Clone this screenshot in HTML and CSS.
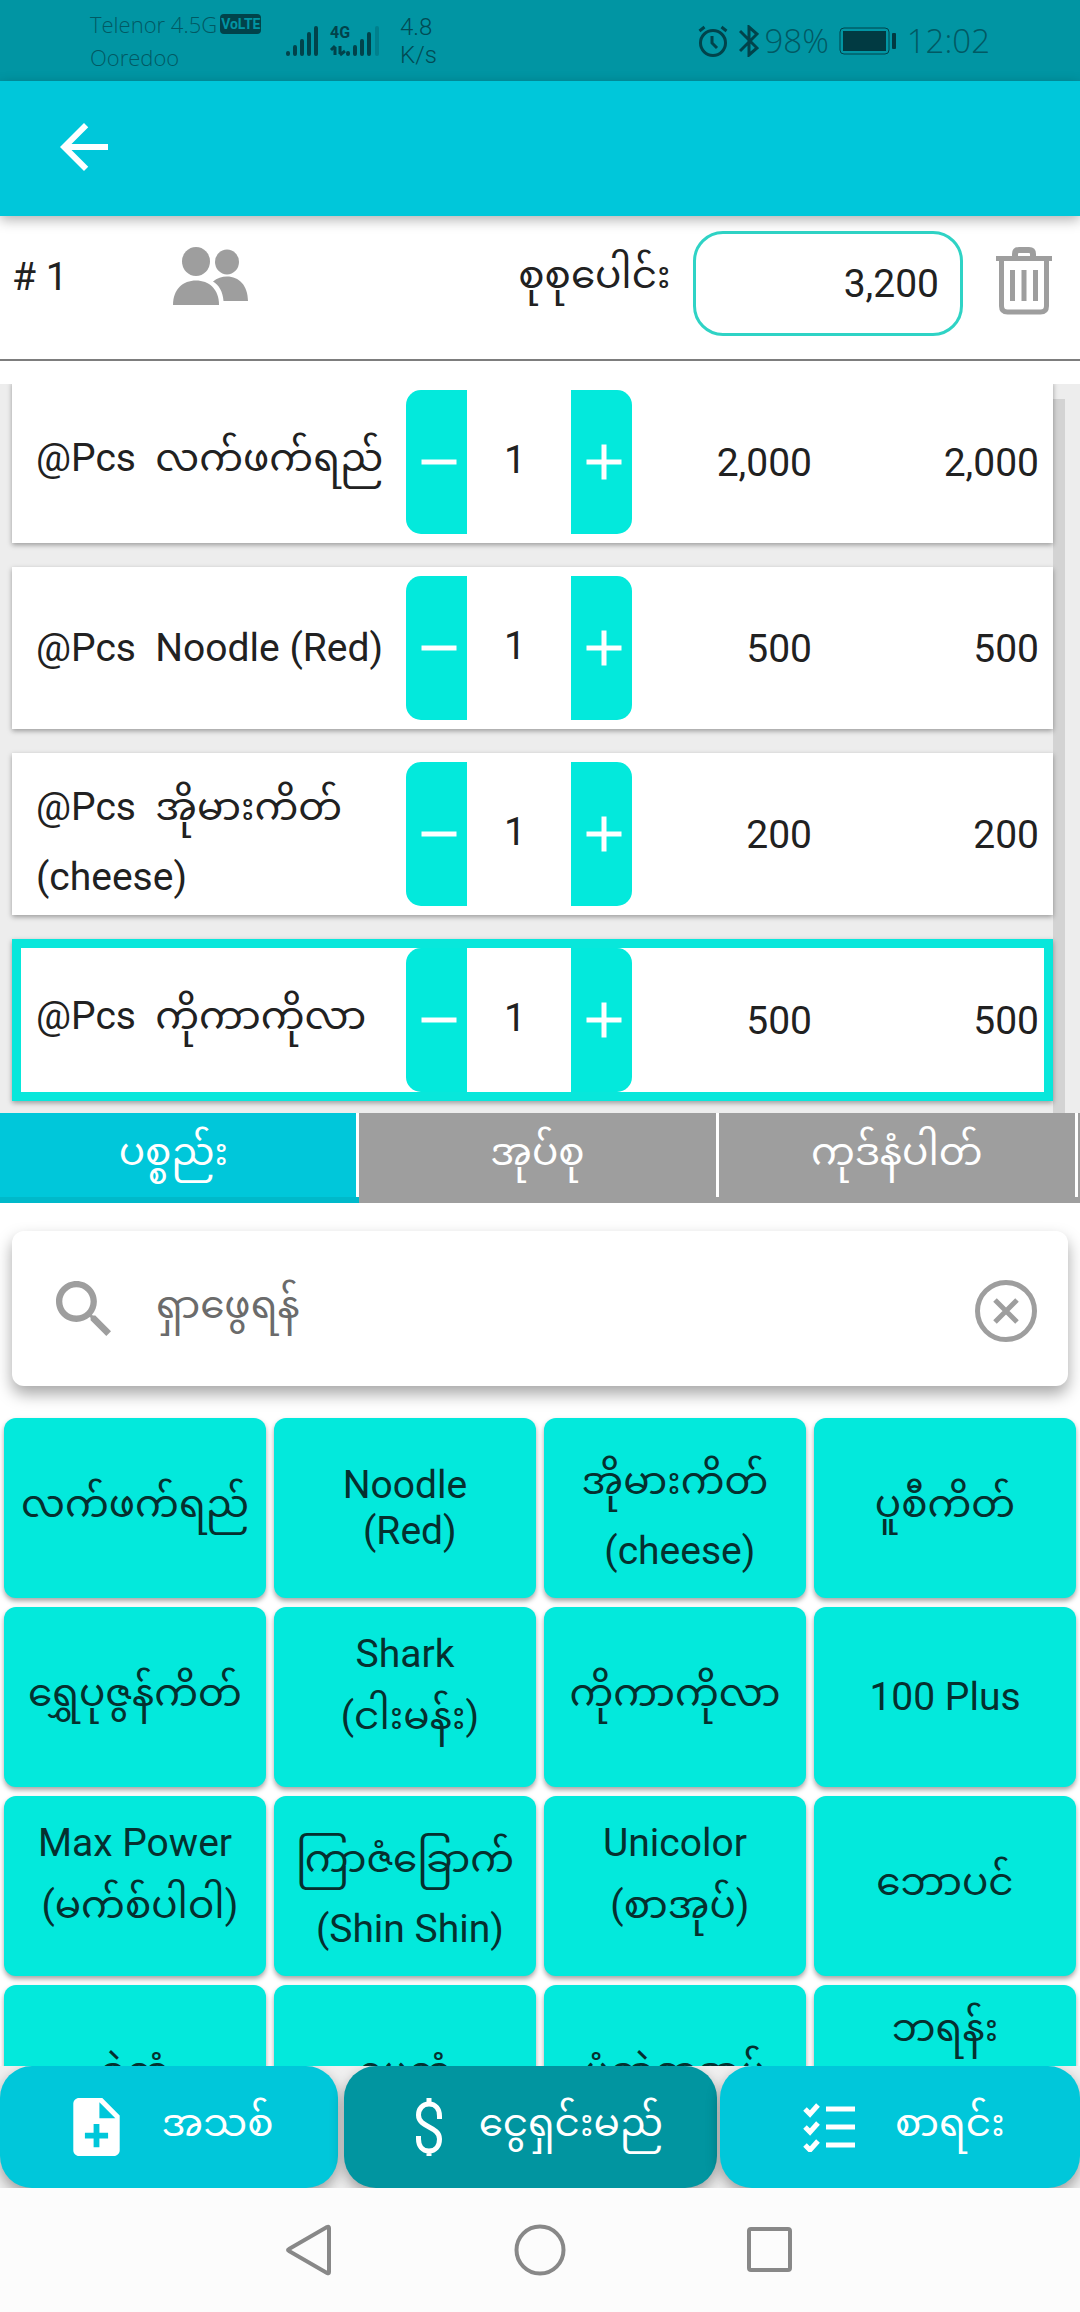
FILE: index.html
```
<!DOCTYPE html>
<html lang="my">
<head>
  <meta charset="UTF-8" />
  <meta name="viewport" content="width=device-width, initial-scale=1.0"/>
  <title>POS - Sale</title>
  <link rel="stylesheet" href="styles.css">
</head>
<body>

<!-- Status bar -->
<div class="status-bar">
  <div class="carriers">
    <div class="carrier">Telenor 4.5G <span class="volte">VoLTE</span></div>
    <div class="carrier">Ooredoo</div>
  </div>
  <svg class="signals" viewBox="0 0 94 32" aria-hidden="true">
    <g stroke-width="4" stroke-linecap="round">
      <path d="M2 28v1M9 22v7M16 16v13M23 9v20M30 3v26M62 28v1M69 22v7M76 16v13M83 9v20"/>
      <path d="M91 3v26" opacity=".25"/>
    </g>
    <path d="M49 22v8M45 25l4-4M54 21v8M59 26l-5 4" stroke-width="3"/>
    <text x="44" y="13" font-size="16">4G</text>
  </svg>
  <div class="speed">4.8<br>K/s</div>
  <div class="status-right">
    <svg class="alarm" viewBox="0 0 30 32" aria-hidden="true">
      <circle cx="15" cy="18" r="12.5"/>
      <path d="M14 11v7l5 5M1.500 6l5-4M28.500 6l-5-4"/>
    </svg>
    <svg class="bluetooth" viewBox="0 0 20 32" aria-hidden="true">
      <path d="M1 6l17 17-8 7V2l8 7L1 26"/>
    </svg>
    <span class="status-text">98%</span>
    <svg class="battery" viewBox="0 0 58 28" aria-hidden="true">
      <rect x="1" y="1" width="49" height="26" rx="4" fill="none"/>
      <rect x="4" y="4" width="43" height="20" fill="#013a42" stroke="none"/>
      <rect x="53" y="6" width="4" height="16" rx="1" fill="#013a42" stroke="none"/>
    </svg>
    <span class="status-text">12:02</span>
  </div>
</div>

<!-- App bar -->
<header class="app-bar">
  <button type="button" class="btn-back" aria-label="Back">
    <svg viewBox="4 4 16 16"><path d="M20 11H7.830l5.590-5.590L12 4l-8 8 8 8 1.410-1.410L7.830 13H20v-2z"/></svg>
  </button>
</header>

<main class="sale">
  <!-- Sale summary -->
  <section class="summary">
    <span class="sale-no"># 1</span>
    <button type="button" class="btn-customer" aria-label="Customer">
      <svg viewBox="0 0 75 58">
        <ellipse cx="23" cy="14.500" rx="14" ry="14.500"/>
        <ellipse cx="54" cy="15" rx="12" ry="12.500"/>
        <path d="M0 58C0 42 10 33.500 23 33.500S46 42 46 58z"/>
        <path d="M40 34.500C44 31 49 29.500 54 29.500c12 0 21 9 21 24.500H50.500C50 45 46 38 40 34.500z"/>
      </svg>
    </button>
    <label class="total-label" for="total">စုစုပေါင်း</label>
    <input class="total-box" id="total" type="text" value="3,200" readonly>
    <button type="button" class="btn-delete" aria-label="Delete">
      <svg viewBox="0 0 56 68">
        <path d="M19 11V7q0-4 4-4h10q4 0 4 4v4" fill="none" stroke="#9e9e9e" stroke-width="6"/>
        <path d="M0 9h56v5H0z"/>
        <path d="M5.500 12v47q0 6 6 6h33q6 0 6-6V12" fill="none" stroke="#9e9e9e" stroke-width="5"/>
        <path d="M14 23h5v31h-5zM25.500 23h5v31h-5zM37 23h5v31h-5z"/>
      </svg>
    </button>
  </section>

  <!-- Ordered items -->
  <section class="order">
    <ul class="order-list">
      <li class="order-row">
        <span class="item-name">@Pcs&nbsp; လက်ဖက်ရည်</span>
        <div class="stepper">
          <button type="button" class="btn-minus" aria-label="Less"><svg viewBox="4 4 16 16"><path d="M19 13H5v-2h14v2z"/></svg></button>
          <span class="qty">1</span>
          <button type="button" class="btn-plus" aria-label="More"><svg viewBox="4 4 16 16"><path d="M19 13h-6v6h-2v-6H5v-2h6V5h2v6h6v2z"/></svg></button>
        </div>
        <span class="price">2,000</span>
        <span class="price">2,000</span>
      </li>
      <li class="order-row">
        <span class="item-name">@Pcs&nbsp; Noodle (Red)</span>
        <div class="stepper">
          <button type="button" class="btn-minus" aria-label="Less"><svg viewBox="4 4 16 16"><path d="M19 13H5v-2h14v2z"/></svg></button>
          <span class="qty">1</span>
          <button type="button" class="btn-plus" aria-label="More"><svg viewBox="4 4 16 16"><path d="M19 13h-6v6h-2v-6H5v-2h6V5h2v6h6v2z"/></svg></button>
        </div>
        <span class="price">500</span>
        <span class="price">500</span>
      </li>
      <li class="order-row">
        <span class="item-name">@Pcs&nbsp; အိုမားကိတ်<br>(cheese)</span>
        <div class="stepper">
          <button type="button" class="btn-minus" aria-label="Less"><svg viewBox="4 4 16 16"><path d="M19 13H5v-2h14v2z"/></svg></button>
          <span class="qty">1</span>
          <button type="button" class="btn-plus" aria-label="More"><svg viewBox="4 4 16 16"><path d="M19 13h-6v6h-2v-6H5v-2h6V5h2v6h6v2z"/></svg></button>
        </div>
        <span class="price">200</span>
        <span class="price">200</span>
      </li>
      <li class="order-row selected">
        <span class="item-name">@Pcs&nbsp; ကိုကာကိုလာ</span>
        <div class="stepper">
          <button type="button" class="btn-minus" aria-label="Less"><svg viewBox="4 4 16 16"><path d="M19 13H5v-2h14v2z"/></svg></button>
          <span class="qty">1</span>
          <button type="button" class="btn-plus" aria-label="More"><svg viewBox="4 4 16 16"><path d="M19 13h-6v6h-2v-6H5v-2h6V5h2v6h6v2z"/></svg></button>
        </div>
        <span class="price">500</span>
        <span class="price">500</span>
      </li>
    </ul>
    <div class="scrollbar"></div>
  </section>

  <!-- Catalog -->
  <section class="catalog">
    <div class="tabs">
      <button type="button" class="tab active">ပစ္စည်း&nbsp;</button>
      <button type="button" class="tab">အုပ်စု</button>
      <button type="button" class="tab">ကုဒ်နံပါတ်</button>
    </div>

    <div class="search">
      <svg class="search-icon" viewBox="3 3 17.490 17.490" aria-hidden="true"><path d="M15.500 14h-.790l-.280-.270C15.410 12.590 16 11.110 16 9.500 16 5.910 13.090 3 9.500 3S3 5.910 3 9.500 5.910 16 9.500 16c1.610 0 3.090-.590 4.230-1.570l.270.280v.790l5 4.990L20.490 19l-4.990-5zm-6 0C7.010 14 5 11.990 5 9.500S7.010 5 9.500 5 14 7.010 14 9.500 11.990 14 9.500 14z"/></svg>
      <input class="search-box" type="text" placeholder="ရှာဖွေရန်" aria-label="ရှာဖွေရန်">
      <button type="button" class="btn-clear" aria-label="Clear">
        <svg viewBox="0 0 62 62"><circle cx="31" cy="31" r="28.500"/><path d="M20 20l22 22M42 20L20 42"/></svg>
      </button>
    </div>

    <div class="items">
      <button type="button" class="item">လက်ဖက်ရည်</button>
      <button type="button" class="item">Noodle<br>&nbsp;(Red)</button>
      <button type="button" class="item">အိုမားကိတ်<br>&nbsp;(cheese)</button>
      <button type="button" class="item">ပူစီကိတ်</button>
      <button type="button" class="item">ရွှေပုဇွန်ကိတ်</button>
      <button type="button" class="item">Shark<br>&nbsp;(ငါးမန်း)</button>
      <button type="button" class="item">ကိုကာကိုလာ</button>
      <button type="button" class="item">100 Plus</button>
      <button type="button" class="item">Max Power<br>&nbsp;(မက်စ်ပါဝါ)</button>
      <button type="button" class="item">ကြာဇံခြောက်<br>&nbsp;(Shin Shin)</button>
      <button type="button" class="item">Unicolor<br>&nbsp;(စာအုပ်)</button>
      <button type="button" class="item">ဘောပင်</button>
      <button type="button" class="item">ခဲတံ</button>
      <button type="button" class="item">ပေတံ</button>
      <button type="button" class="item">ပုံဆွဲစာအုပ်</button>
      <button type="button" class="item">ဘရန်း<br>ကိတ်</button>
    </div>
  </section>
</main>

<!-- Actions -->
<footer class="actions">
  <button type="button" class="action btn-new">
    <svg class="icon-new" viewBox="4 2 16 20"><path d="M14 2H6c-1.100 0-2 .9-2 2v16c0 1.100.9 2 2 2h12c1.100 0 2-.9 2-2V8l-6-6zm2 14h-3v3h-2v-3H8v-2h3v-3h2v3h3v2zm-3-7V3.500L18.500 9H13z"/></svg>
    အသစ်
  </button>
  <button type="button" class="action btn-pay">
    <svg class="icon-pay" viewBox="0 0 26 58"><path d="M13 0v7M13 51v7M23.500 21v-3c0-7-4-12-10.500-12S2.500 11 2.500 17c0 13 21 11 21 24 0 7-4 12-10.500 12S2.500 48 2.500 41v-3"/></svg>
    ငွေရှင်းမည်
  </button>
  <button type="button" class="action btn-list">
    <svg class="icon-list" viewBox="0 0 52 50"><path d="M23 7h29M23 25h29M23 43h29M2 7l5 5 8-9M2 25l5 5 8-9M2 43l5 5 8-9"/></svg>
    စာရင်း
  </button>
</footer>

<!-- System navigation -->
<nav class="nav-bar">
  <button type="button" aria-label="Back"><svg viewBox="0 0 52 52"><path d="M44 4v44q0 2-2 1L4 27q-2-1 0-2L42 3q2-1 2 1z"/></svg></button>
  <button type="button" aria-label="Home"><svg viewBox="0 0 52 52"><circle cx="26" cy="26" r="23.500"/></svg></button>
  <button type="button" aria-label="Recent"><svg viewBox="0 0 52 52"><rect x="6" y="5" width="41" height="41" rx="2"/></svg></button>
</nav>

</body>
</html>
```

FILE: styles.css
```
* {
  box-sizing: border-box;
}

body {
  display: flex;
  flex-direction: column;
  height: 100vh;
  margin: 0;
  background-color: #fff;
  color: #212121;
  font-family: Roboto, "Noto Sans Myanmar", "Noto Sans", sans-serif;
  font-size: 39px;
}

button,
input {
  padding: 0;
  border: none;
  background: none;
  color: inherit;
  font: inherit;
}

button {
  cursor: pointer;
}

svg {
  display: block;
  flex: none;
}

/* Status bar */
.status-bar {
  display: flex;
  align-items: center;
  height: 81px;
  padding: 0 90px;
  background-color: #0195a3;
  color: #015963;
  font-family: "Open Sans", sans-serif;
  font-weight: 300;
}

.carriers {
  width: 196px;
  font-size: 22px;
  line-height: 33px;
}

.carrier {
  display: flex;
  align-items: center;
  gap: 3px;
  white-space: nowrap;
}

.volte {
  padding: 0 1px;
  border-radius: 4px;
  background-color: #01434b;
  color: #0195a3;
  font-family: Roboto, sans-serif;
  font-size: 14px;
  font-weight: 700;
  line-height: 20px;
}

.signals {
  width: 94px;
  height: 32px;
  fill: none;
  stroke: #01434b;
}

.signals text {
  fill: #01434b;
  stroke: none;
  font-family: Roboto, sans-serif;
  font-weight: 700;
}

.speed {
  margin-left: 20px;
  color: #014b54;
  font-family: Roboto, sans-serif;
  font-size: 24px;
  line-height: 28px;
}

.status-right {
  display: flex;
  align-items: center;
  margin-left: auto;
}

.alarm,
.bluetooth,
.battery {
  fill: none;
  stroke: #01434b;
  stroke-width: 3;
}

.alarm {
  width: 30px;
  height: 32px;
  margin-right: 11px;
}

.bluetooth {
  width: 20px;
  height: 32px;
  margin-right: 5px;
}

.battery {
  width: 58px;
  height: 28px;
  margin: 0 10px;
  stroke-width: 1;
}

.status-text {
  font-size: 33px;
}

/* App bar */
.app-bar {
  position: relative;
  z-index: 1;
  display: flex;
  align-items: center;
  height: 135px;
  padding: 0 60px 4px;
  background-color: #00c7da;
  box-shadow: 0 4px 12px rgba(0, 0, 0, 0.3);
}

.btn-back svg {
  width: 48px;
  height: 48px;
  fill: #fff;
}

.sale {
  display: flex;
  flex: 1;
  flex-direction: column;
  min-height: 0;
}

/* Summary */
.summary {
  display: flex;
  align-items: flex-start;
  height: 145px;
  margin-bottom: 23px;
  padding: 15px 28px 0 12px;
  border-bottom: 2px solid #7d7d7d;
}

.sale-no {
  width: 161px;
  margin-top: 23px;
}

.btn-customer {
  margin-top: 16px;
}

.btn-customer svg {
  width: 75px;
  height: 58px;
  fill: #9e9e9e;
}

.total-label {
  margin-top: 5px;
  margin-right: 22px;
  margin-left: auto;
}

.total-box {
  width: 26%;
  height: 105px;
  padding: 0 21px;
  border: 3px solid #2fd3c5;
  border-radius: 30px;
  text-align: right;
}

.btn-delete {
  margin-top: 16px;
  margin-left: 33px;
}

.btn-delete svg {
  width: 56px;
  height: 68px;
  fill: #9e9e9e;
}

/* Order */
.order {
  position: relative;
  display: flex;
  flex: 13 1 0;
  flex-direction: column;
  justify-content: flex-end;
  min-height: 0;
  overflow: hidden;
  background-color: #ededed;
}

.order-list {
  display: flex;
  flex: none;
  flex-direction: column;
  gap: 24px;
  margin: 0;
  padding: 0 27px 12px 12px;
  list-style: none;
}

.order-row {
  position: relative;
  z-index: 1;
  display: grid;
  grid-template-columns: 394fr 226px 180fr 241fr;
  align-items: center;
  height: 162px;
  background-color: #fff;
  box-shadow: 0 2px 5px rgba(0, 0, 0, 0.35);
}

.order-row.selected {
  box-shadow: inset 0 0 0 9px #08e7db, 0 2px 5px rgba(0, 0, 0, 0.35);
}

.item-name {
  padding-left: 24px;
}

.stepper {
  display: flex;
  align-items: center;
  height: 144px;
}

.btn-minus,
.btn-plus {
  display: flex;
  align-items: center;
  justify-content: center;
  width: 61px;
  height: 144px;
  padding-left: 5px;
  background-color: #03e9dc;
}

.btn-minus {
  border-radius: 15px 0 0 15px;
}

.btn-plus {
  border-radius: 0 15px 15px 0;
}

.stepper svg {
  width: 40px;
  height: 40px;
  fill: #fff;
}

.qty {
  flex: 1;
  padding: 0 8px 4px 0;
  text-align: center;
}

.price {
  padding-top: 2px;
  text-align: right;
}

.price:last-child {
  padding-right: 14px;
}

.scrollbar {
  position: absolute;
  top: 15px;
  right: 15px;
  bottom: 0;
  width: 12px;
  background-color: #d3d3d3;
}

/* Catalog */
.catalog {
  position: relative;
  z-index: 1;
  display: flex;
  flex: 17 1 0;
  flex-direction: column;
  min-height: 0;
  overflow: hidden;
  background-color: #fff;
}

.tabs {
  display: flex;
  flex: none;
  height: 90px;
  padding: 0 2px 6px 0;
  background-color: #9e9e9e;
  color: #fff;
}

.tab {
  flex: 1;
  padding-bottom: 2px;
  border-right: 3px solid #fff;
}

.tab.active {
  background-color: #00c7da;
  box-shadow: 0 6px #00b9ca;
}

.search {
  display: flex;
  flex: none;
  align-items: center;
  height: 155px;
  margin: 28px 12px 32px;
  padding: 0 31px 0 44px;
  border-radius: 12px;
  background-color: #fff;
  box-shadow: 0 8px 16px rgba(0, 0, 0, 0.35);
}

.search-icon {
  width: 55px;
  height: 55px;
  fill: #9e9e9e;
}

.search-box {
  flex: 1;
  height: 100%;
  min-width: 0;
  margin: 0 45px;
  padding-bottom: 6px;
}

.search-box::placeholder {
  color: #6b6b6b;
}

.btn-clear {
  padding-top: 6px;
}

.btn-clear svg {
  width: 62px;
  height: 62px;
  fill: none;
  stroke: #9e9e9e;
  stroke-width: 5;
}

.items {
  display: grid;
  grid-template-columns: repeat(4, 1fr);
  grid-auto-rows: 180px;
  gap: 9px 8px;
  padding: 0 4px;
}

.item {
  padding-top: 1px;
  border-radius: 12px;
  background-color: #03e9dc;
  box-shadow: 0 3px 5px rgba(0, 0, 0, 0.35);
  color: #05302f;
}

/* Actions */
.actions {
  display: flex;
  flex: none;
  height: 122px;
  background-color: #f0f0f0;
  color: #fff;
  overflow: hidden;
}

.action {
  display: flex;
  align-items: center;
  justify-content: center;
  padding-left: 8px;
  border-radius: 32px;
  background-color: #00c7da;
  box-shadow: 0 6px 14px rgba(0, 0, 0, 0.35);
  white-space: nowrap;
}

.action svg {
  fill: none;
  stroke: #fff;
  stroke-width: 5;
}

.btn-new {
  gap: 42px;
  width: 31.3%;
  margin-right: 6px;
}

.btn-pay {
  gap: 37px;
  width: 34.5%;
  margin-right: 3px;
  padding-left: 18px;
  background-color: #0195a0;
}

.btn-list {
  flex: 1;
  gap: 40px;
}

.action .icon-new {
  width: 47px;
  height: 58px;
  fill: #fff;
  stroke: none;
}

.icon-pay {
  width: 26px;
  height: 58px;
}

.icon-list {
  width: 52px;
  height: 50px;
}

/* System navigation */
.nav-bar {
  display: flex;
  flex: none;
  align-items: center;
  justify-content: center;
  gap: 177px;
  height: 124px;
  background-color: #fcfcfc;
}

.nav-bar svg {
  width: 52px;
  height: 52px;
  fill: none;
  stroke: #888;
  stroke-width: 4;
}
```
